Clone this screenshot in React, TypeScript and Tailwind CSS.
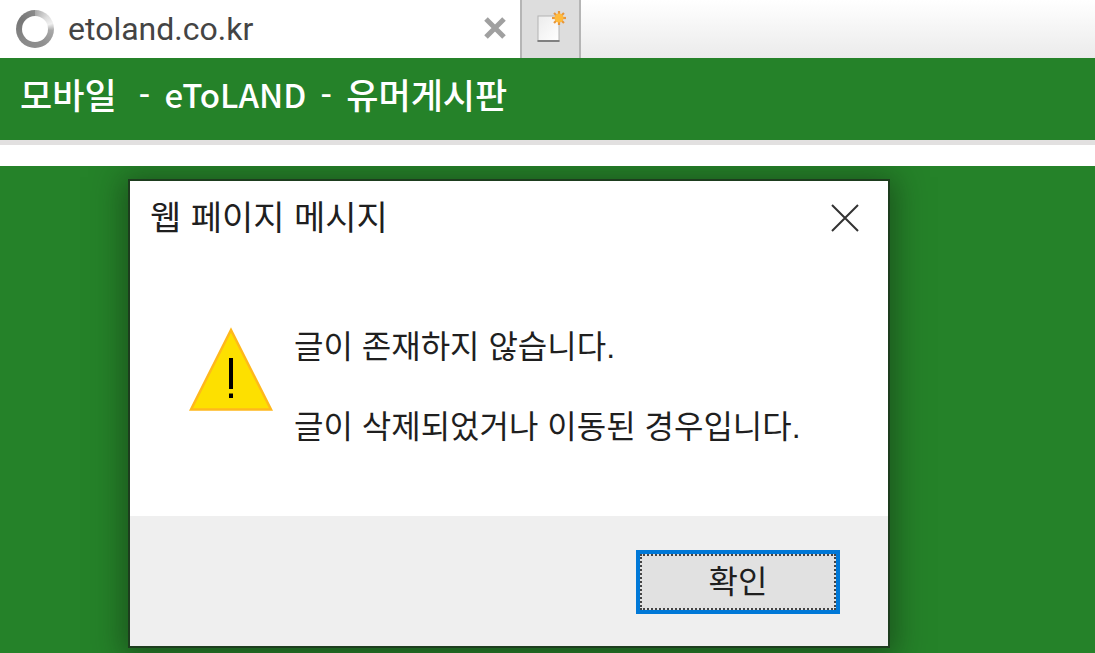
const rays = [0, 45, 90, 135, 180, 225, 270, 315];

function TabBar() {
  return (
    <div className="flex h-[58px] shrink-0 bg-linear-to-b from-white to-[#ebebeb]">
      <div className="flex w-[520px] items-center bg-white pr-[11px] pl-4">
        <div
          aria-hidden="true"
          className="size-[38px] shrink-0 rounded-full bg-[conic-gradient(#a8a8a8_0deg,#dedede_45deg,#f0f0f0_72deg,#a8a8a8_95deg,#909090_150deg,#8a8a8a_220deg,#777777_300deg,#8a8a8a_360deg)] p-[6px]"
        >
          <div className="size-full rounded-full bg-white" />
        </div>
        <span className="ml-[14px] flex-1 font-['Roboto','Noto_Sans',sans-serif] text-[32px] leading-[40px] whitespace-nowrap text-[#444444]">
          etoland.co.kr
        </span>
        <button type="button" aria-label="탭 닫기" className="flex size-7 items-center justify-center">
          <svg width="28" height="28" viewBox="0 0 28 28" fill="none">
            <path d="M5 4L23 22M23 4L5 22" stroke="#a0a0a0" strokeWidth="5" />
          </svg>
        </button>
      </div>
      <button
        type="button"
        aria-label="새 탭"
        className="flex w-[61px] items-center justify-center border-x-2 border-[#b5b5b5] bg-[#dddddd]"
      >
        <svg width="36" height="40" viewBox="0 0 36 40">
          <defs>
            <linearGradient id="sheet" x1="0" y1="0" x2="1" y2="1">
              <stop offset="0" stopColor="#ececec" />
              <stop offset="1" stopColor="#ffffff" />
            </linearGradient>
          </defs>
          <rect x="5" y="7" width="21" height="25" fill="url(#sheet)" stroke="#b4b4b4" />
          <path d="M4.500 32H26.500" stroke="#808080" strokeWidth="2" />
          <g stroke="#e8963a" strokeWidth="2.200">
            {rays.map((angle) => (
              <path key={angle} d="M26 9V2" transform={`rotate(${angle} 26 9)`} />
            ))}
          </g>
          <circle cx="26" cy="9" r="4.500" fill="#ffba3c" />
        </svg>
      </button>
    </div>
  );
}

function Dash() {
  return <span className="font-['DejaVu_Sans_Mono',monospace]">-</span>;
}

function WarningIcon() {
  return (
    <svg width="86" height="86" viewBox="0 0 86 86" className="shrink-0" role="img" aria-label="경고">
      <path d="M43 3L83 82.500H3Z" fill="#fde000" stroke="#ffb81c" strokeWidth="2.500" />
      <path d="M43 31V62M43 66.500V71" stroke="#000000" strokeWidth="4" />
    </svg>
  );
}

function MessageDialog() {
  return (
    <div
      role="dialog"
      aria-labelledby="dialog-title"
      className="w-[762px] max-w-full border-2 border-[#1d3d1e] bg-white font-['Liberation_Sans','Noto_Sans_CJK_KR',sans-serif] shadow-[0_4px_28px_6px_rgba(20,50,20,0.55)]"
    >
      <div className="flex h-[74px] items-center justify-between pr-[23px] pl-5">
        <h2 id="dialog-title" className="text-[34px] leading-[40px] text-[#1f1f1f]">
          웹 페이지 메시지
        </h2>
        <button type="button" aria-label="닫기" className="flex size-10 items-center justify-center">
          <svg width="28" height="28" viewBox="0 0 28 28" fill="none">
            <path d="M1 1L27 27M27 1L1 27" stroke="#333333" strokeWidth="2" />
          </svg>
        </button>
      </div>
      <div className="flex gap-5 pt-[72px] pr-14 pb-[69px] pl-[58px]">
        <WarningIcon />
        <div className="text-[32px] leading-[40px] whitespace-nowrap text-[#1f1f1f]">
          <p>글이 존재하지 않습니다.</p>
          <p className="mt-10">글이 삭제되었거나 이동된 경우입니다.</p>
        </div>
      </div>
      <div className="flex justify-end bg-[#efefef] pt-[34px] pr-12 pb-8">
        <button type="button" className="h-[64px] w-[204px] border-4 border-[#0078d7] bg-[#e1e1e1]">
          <span className="flex size-full items-center justify-center border-2 border-dotted border-[#444444] text-[32px] text-[#1f1f1f]">
            확인
          </span>
        </button>
      </div>
    </div>
  );
}

export default function App() {
  return (
    <div className="flex min-h-screen flex-col overflow-hidden bg-white font-['Noto_Sans_CJK_KR',sans-serif]">
      <TabBar />
      <header className="h-[87px] shrink-0 border-b-5 border-[#e2e0e0] bg-[#258229] px-5 pt-4">
        <h1 className="flex gap-x-2.5 text-[33px] leading-[40px] font-medium whitespace-nowrap text-white">
          <span className="pr-2 text-[35px]">모바일</span>
          <Dash />
          <span>eToLAND</span>
          <Dash />
          <span className="text-[35px]">유머게시판</span>
        </h1>
      </header>
      <main className="mt-[21px] flex-1 overflow-hidden bg-[#258229] pt-[13px] pb-[5px] pl-[128px]">
        <MessageDialog />
      </main>
    </div>
  );
}
